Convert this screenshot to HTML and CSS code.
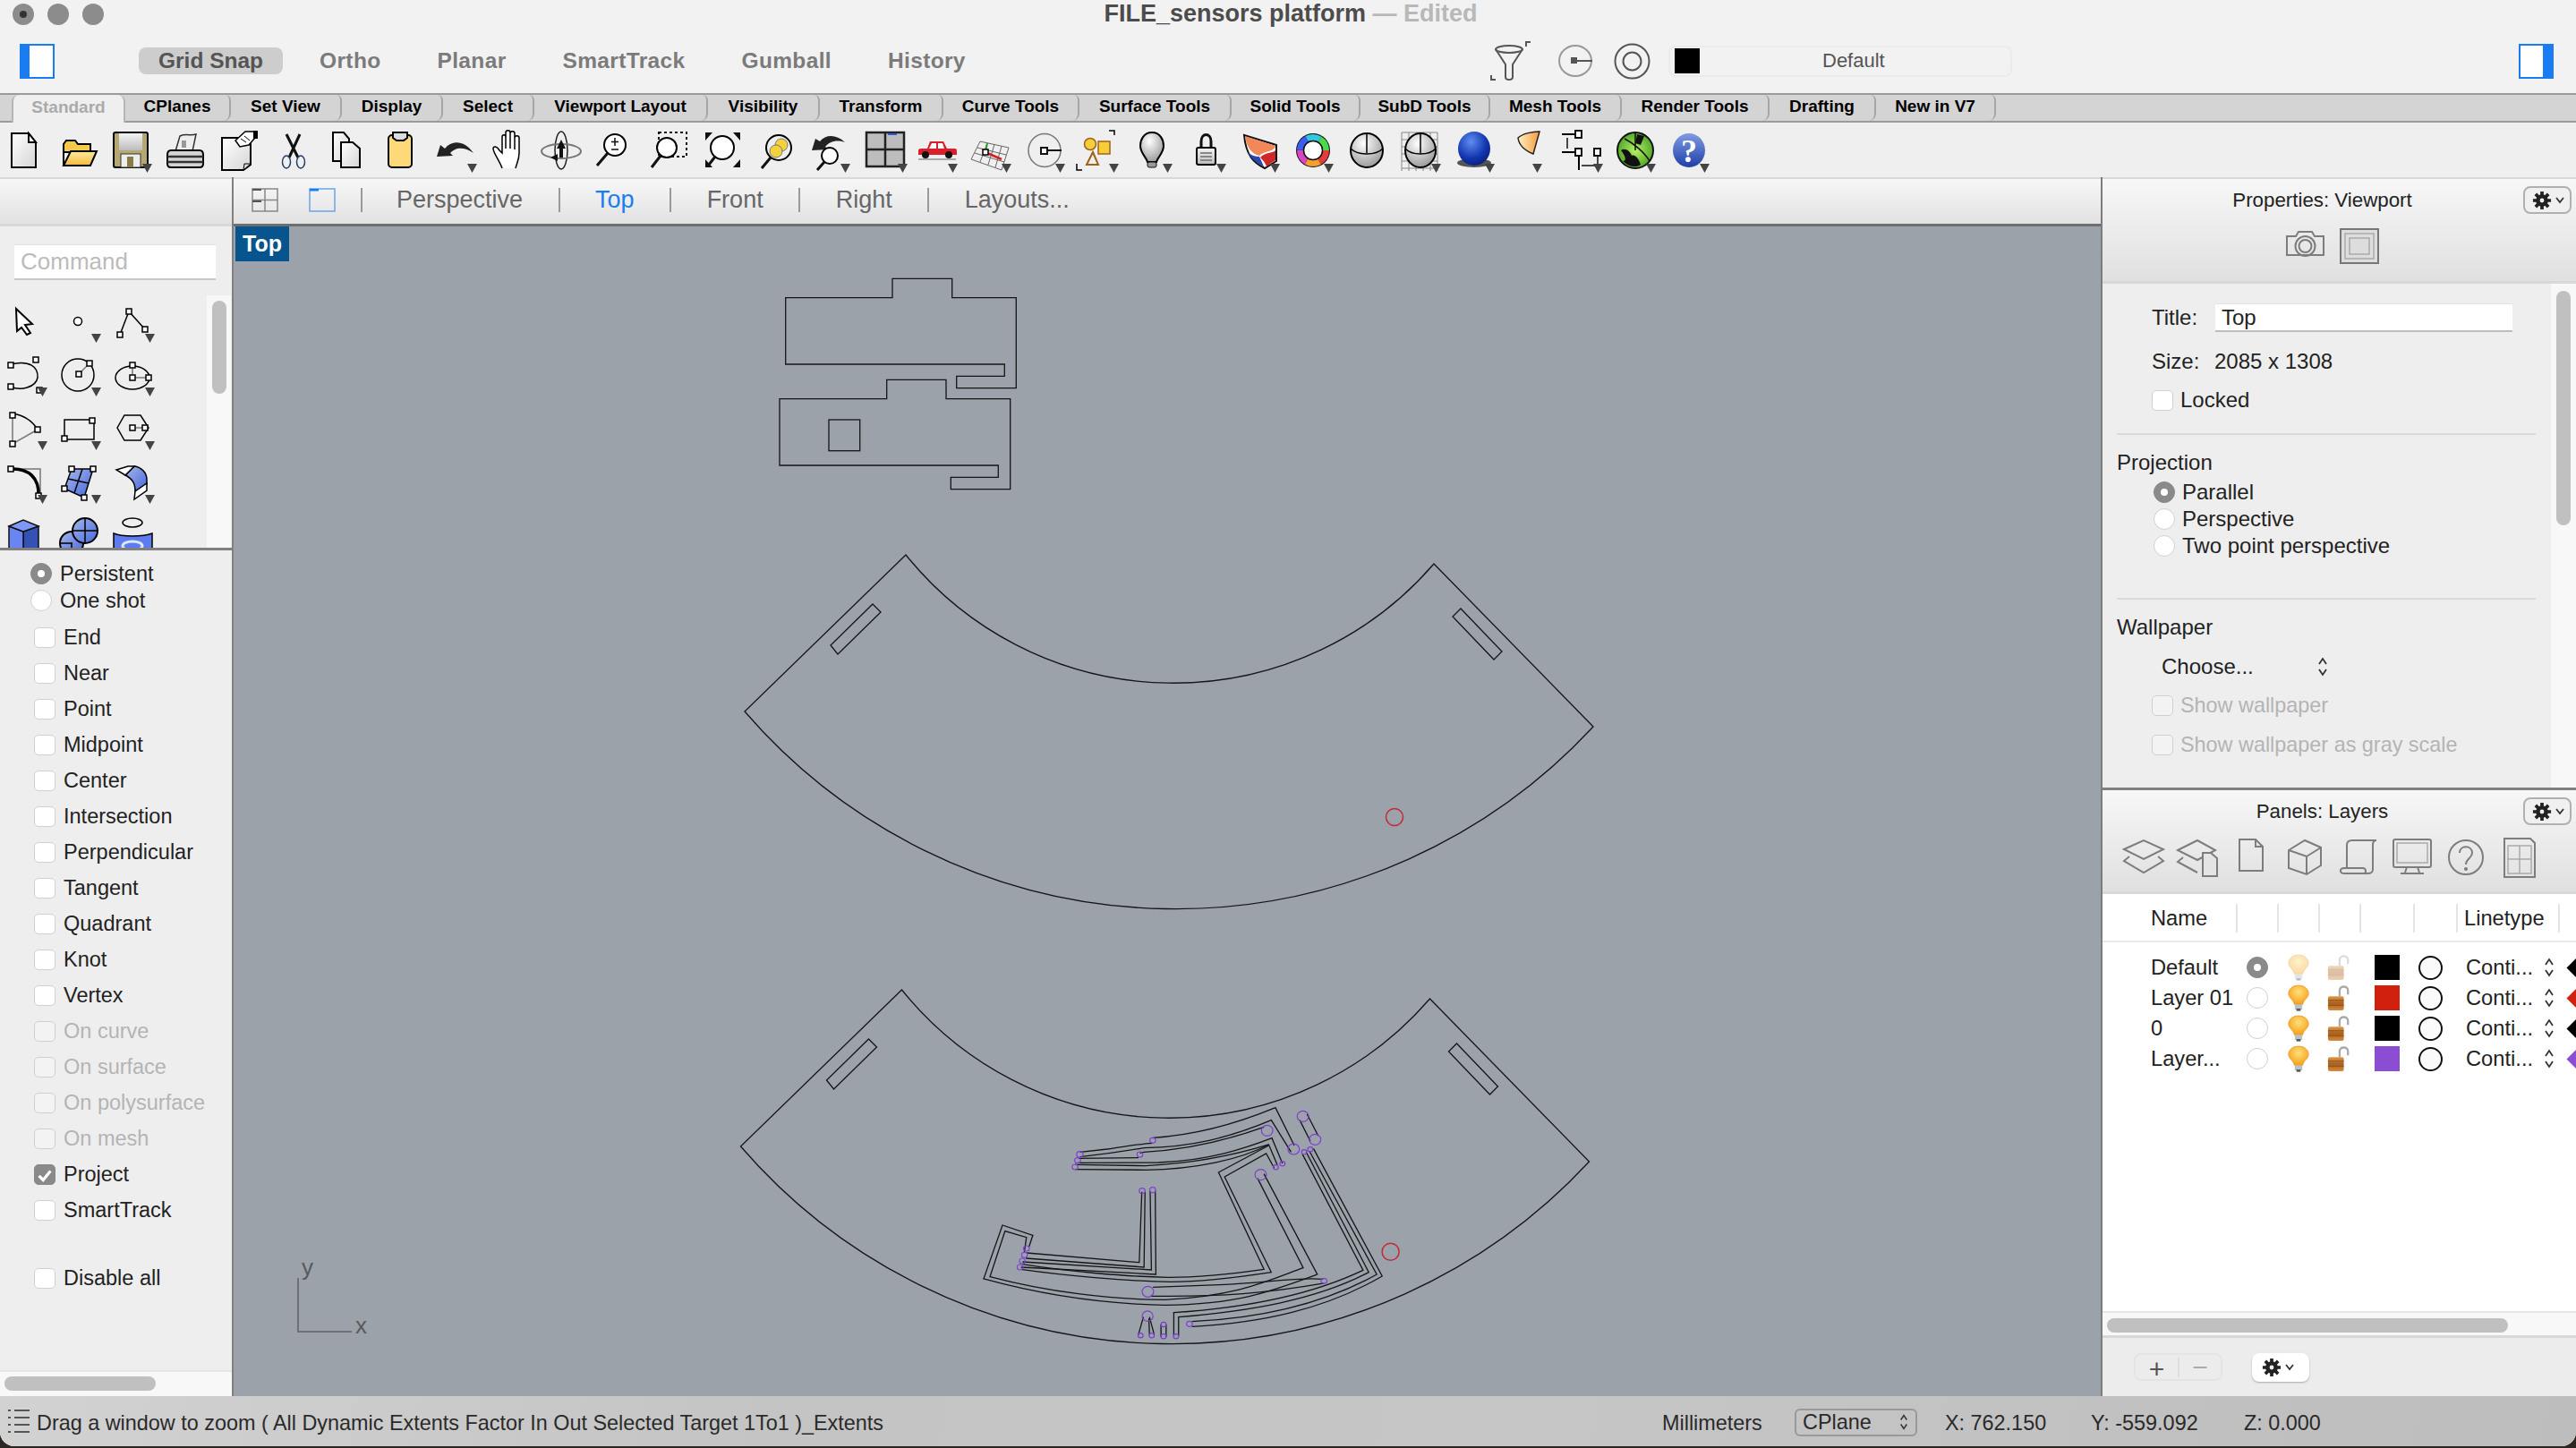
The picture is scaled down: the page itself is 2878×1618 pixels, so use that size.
FILE: index.html
```html
<!DOCTYPE html>
<html lang="en">
<head>
<meta charset="utf-8">
<title>FILE_sensors platform</title>
<link rel="stylesheet" href="styles.css">
</head>
<body>
<svg class="defs" width="0" height="0">
  <defs>
    <linearGradient id="gPage" x1="0" y1="0" x2="1" y2="1"><stop offset="0" stop-color="#fff"/><stop offset="1" stop-color="#d5d5d5"/></linearGradient>
    <linearGradient id="gYellow" x1="0" y1="0" x2="0" y2="1"><stop offset="0" stop-color="#fdeaa0"/><stop offset="1" stop-color="#f4b93c"/></linearGradient>
    <linearGradient id="gGray" x1="0" y1="0" x2="0" y2="1"><stop offset="0" stop-color="#f4f4f4"/><stop offset="1" stop-color="#bcbcbc"/></linearGradient>
    <linearGradient id="gBlue" x1="0" y1="0" x2="1" y2="1"><stop offset="0" stop-color="#a7b8e8"/><stop offset="1" stop-color="#4466dd"/></linearGradient>
    <linearGradient id="gHelp" x1="0" y1="0" x2="0" y2="1"><stop offset="0" stop-color="#7f9ce0"/><stop offset="1" stop-color="#1f3fa8"/></linearGradient>
    <radialGradient id="gSphere" cx=".4" cy=".3" r=".8"><stop offset="0" stop-color="#fff"/><stop offset="1" stop-color="#8f8f8f"/></radialGradient>
    <radialGradient id="gBlueBall" cx=".4" cy=".3" r=".8"><stop offset="0" stop-color="#5f8df0"/><stop offset=".6" stop-color="#1336b0"/><stop offset="1" stop-color="#061a70"/></radialGradient>
    <radialGradient id="gGlobe" cx=".5" cy=".5" r=".6"><stop offset="0" stop-color="#b7ef63"/><stop offset="1" stop-color="#3f9a20"/></radialGradient>
    <radialGradient id="gBulb" cx=".5" cy=".35" r=".7"><stop offset="0" stop-color="#ffe07a"/><stop offset="1" stop-color="#f59a12"/></radialGradient>
    <linearGradient id="gLock" x1="0" y1="0" x2="0" y2="1"><stop offset="0" stop-color="#e09a48"/><stop offset=".5" stop-color="#a8601e"/><stop offset="1" stop-color="#d68a3a"/></linearGradient>
    <linearGradient id="gCone" x1="0" y1="0" x2="1" y2="0"><stop offset="0" stop-color="#fff1c4"/><stop offset="1" stop-color="#f59a3a"/></linearGradient>
    <symbol id="gear" viewBox="0 0 24 24">
      <path class="gear-teeth" d="M12 1V23M1 12H23M4.2 4.2L19.8 19.8M19.8 4.2L4.2 19.8"/>
      <circle cx="12" cy="12" r="7.5" fill="#222"/><circle cx="12" cy="12" r="2.6" fill="#eee"/>
    </symbol>
    <symbol id="updown" viewBox="0 0 12 24">
      <path class="chev" d="M2 9L6 3L10 9M2 15L6 21L10 15"/>
    </symbol>
    <symbol id="bulb" viewBox="0 0 28 32">
      <path d="M14 1C6 1 2 6 2 11C2 16 8 18 9 24H19C20 18 26 16 26 11C26 6 22 1 14 1Z" fill="url(#gBulb)" stroke="#e8a030"/>
      <rect x="9.500" y="24" width="9" height="6" fill="#b8c0c8"/><rect x="11.500" y="29" width="5" height="3" fill="#555"/>
    </symbol>
    <symbol id="lock" viewBox="0 0 28 32">
      <path d="M15 14V7C15 1 25 1 25 7V12" fill="none" stroke="#aaa" stroke-width="2.500"/>
      <rect x="1" y="14" width="19" height="17" rx="2" fill="url(#gLock)"/>
      <path d="M1 19H20M1 25H20" stroke="#8a5018" stroke-width="1"/>
    </symbol>
  </defs>
</svg>

<div class="window">
  <header class="titlebar">
    <div class="title-row">
      <div class="lights"><span class="light light-close"></span><span class="light"></span><span class="light"></span></div>
      <div class="doc-title">FILE_sensors platform<span class="edited"> — Edited</span></div>
      <div></div>
    </div>
    <div class="tool-row">
      <svg class="side-toggle" viewBox="0 0 39 39"><rect x="1" y="1" width="37" height="37" fill="#fff" stroke="#1a7cf2" stroke-width="2"/><rect x="0" y="0" width="11" height="39" fill="#1a7cf2"/></svg>
      <nav class="modes">
        <span class="mode mode-on">Grid Snap</span>
        <span class="mode">Ortho</span>
        <span class="mode">Planar</span>
        <span class="mode">SmartTrack</span>
        <span class="mode">Gumball</span>
        <span class="mode">History</span>
      </nav>
      <div class="tool-right">
        <svg class="ic-filter" viewBox="0 0 45 44"><path class="thin" d="M40 6V1H45M1 38V43H6"/><ellipse class="thin" cx="21" cy="9" rx="15" ry="4"/><path class="thin" d="M6 9L17 26V40C17 44 25 44 25 40V26L36 9"/></svg>
        <svg class="ic-osnap" viewBox="0 0 39 36"><ellipse class="thin light-stroke" cx="19" cy="18" rx="18" ry="17"/><rect x="14" y="14" width="7" height="7" fill="#555"/><path class="thin" d="M21 18H38"/></svg>
        <svg class="ic-target" viewBox="0 0 41 41"><circle class="thin" cx="20.500" cy="20.500" r="19"/><circle class="thin" cx="20.500" cy="20.500" r="10"/></svg>
        <div class="layer-combo"><span class="layer-chip"></span><span class="layer-name">Default</span></div>
        <svg class="side-toggle side-right" viewBox="0 0 39 39"><rect x="1" y="1" width="37" height="37" fill="#fff" stroke="#1a7cf2" stroke-width="2"/><rect x="27" y="0" width="12" height="39" fill="#1a7cf2"/></svg>
      </div>
    </div>
  </header>

  <div class="tabs">
    <span class="tab tab-on">Standard</span><span class="tab">CPlanes</span><span class="tab">Set View</span><span class="tab">Display</span><span class="tab">Select</span><span class="tab">Viewport Layout</span><span class="tab">Visibility</span><span class="tab">Transform</span><span class="tab">Curve Tools</span><span class="tab">Surface Tools</span><span class="tab">Solid Tools</span><span class="tab">SubD Tools</span><span class="tab">Mesh Tools</span><span class="tab">Render Tools</span><span class="tab">Drafting</span><span class="tab">New in V7</span>
  </div>

  <div class="iconbar">
    <svg class="ti" viewBox="0 0 60 60"><path class="k2" fill="url(#gPage)" d="M16 11H35L43 21V49H16Z"/><path class="k2" fill="#fff" d="M35 11V21H43Z"/></svg>
    <svg class="ti" viewBox="0 0 60 60"><path class="k2" fill="#f5c94e" d="M14 46V23L17 19H27L30 23H44V32H14Z"/><path class="k2" fill="url(#gYellow)" d="M14 47L22 31H51L44 47Z"/></svg>
    <svg class="ti" viewBox="0 0 60 60"><rect class="k2" x="10" y="10" width="38" height="39" rx="2" fill="#b5a873"/><rect x="16" y="11" width="26" height="19" fill="url(#gGray)"/><rect x="18" y="34" width="22" height="15" fill="#eee" stroke="#333"/><rect x="25" y="37" width="7" height="12" fill="#8a7a45"/><path class="tri" d="M42 45H53L47.500 55Z"/></svg>
    <svg class="ti" viewBox="0 0 60 60"><path fill="#eee" stroke="#333" stroke-width="1.500" d="M19 31L24 14C30 11 36 14 42 12L38 31Z"/><rect x="26" y="19" width="5" height="8" fill="#999"/><path class="k2" fill="#d4d4d4" d="M10 35Q10 30 14 30H46Q50 30 50 35V45Q50 49 46 49H14Q10 49 10 45Z"/><path d="M10 37H50M10 43H50" stroke="#333" stroke-width="2.500"/></svg>
    <svg class="ti" viewBox="0 0 60 60"><path class="k2" fill="url(#gPage)" d="M11 16H43V46L35 52H11Z"/><path fill="#fff" stroke="#000" stroke-width="1.500" d="M26 19L37 9H47V17L41 24L31 26Z"/><path d="M32 17L38 21M36 14L42 19" stroke="#000"/><rect x="46" y="8" width="5" height="9" fill="#000"/><path fill="#ddd" stroke="#000" d="M35 52L36 45H43Z"/></svg>
    <svg class="ti" viewBox="0 0 60 60"><path d="M23 12L36 38M38 12L26 38" stroke="#111" stroke-width="3"/><ellipse cx="23" cy="43" rx="4.500" ry="7" fill="none" stroke="#24406e" stroke-width="1.500"/><ellipse cx="39" cy="43" rx="4.500" ry="7" fill="none" stroke="#24406e" stroke-width="1.500"/></svg>
    <svg class="ti" viewBox="0 0 60 60"><path class="k2" fill="url(#gPage)" d="M15 10H27L33 17V42H15Z"/><path class="k2" fill="url(#gPage)" d="M24 21H37L45 28V49H24Z"/></svg>
    <svg class="ti" viewBox="0 0 60 60"><rect class="k2" x="17" y="13" width="26" height="36" rx="4" fill="#fdd97a"/><path class="k2" fill="#ddd" d="M22 10H38V16L34 19H26L22 16Z"/></svg>
    <svg class="ti" viewBox="0 0 60 60"><path fill="#222" d="M11 37L15 24L20 28C28 18 42 19 52 33C42 26 32 26 26 33L29 36Z"/><path class="tri" d="M45 45H56L50.500 55Z"/></svg>
    <svg class="ti" viewBox="0 0 60 60"><path class="k1" transform="translate(2 0)" fill="#fff" d="M22 50C19 41 12 33 12 28C12 25 16 25 19 30L22 33V15C22 12 26 12 26 15V28V10C26 7 31 7 31 10V28V11C31 8 36 8 36 11V29V16C36 13 41 13 41 16V33C41 41 38 45 37 50"/></svg>
    <svg class="ti" viewBox="0 0 60 60"><ellipse cx="30" cy="30" rx="7" ry="21" fill="none" stroke="#222" stroke-width="1.500"/><ellipse cx="30" cy="31" rx="22" ry="8" fill="none" stroke="#777" stroke-width="2"/><path fill="#111" d="M30 18L35 28H32V38H28V28H25ZM18 38L26 34V42Z"/></svg>
    <svg class="ti" viewBox="0 0 60 60"><circle class="k2" cx="30" cy="24" r="12" fill="#fff"/><path stroke="#111" stroke-width="1.500" d="M30 16V25M26 20.500H34M26 29H34"/><path stroke="#111" stroke-width="3" d="M22 33L10 47"/></svg>
    <svg class="ti" viewBox="0 0 60 60"><rect x="19" y="10" width="31" height="27" fill="none" stroke="#111" stroke-width="2" stroke-dasharray="3 3"/><circle class="k2" cx="28" cy="27" r="11" fill="#fff"/><path stroke="#111" stroke-width="3" d="M21 36L11 49"/></svg>
    <svg class="ti" viewBox="0 0 60 60"><path fill="#111" d="M11 10H19L11 19ZM50 10H42L50 19ZM11 49H19L11 40ZM50 49H42L50 40Z"/><circle class="k2" cx="30" cy="27" r="13" fill="#fff"/><path stroke="#111" stroke-width="3" d="M22 37L15 46"/></svg>
    <svg class="ti" viewBox="0 0 60 60"><circle cx="36" cy="24" r="7" fill="#f3d23c" stroke="#777"/><circle cx="30" cy="31" r="7" fill="#f3d23c" stroke="#777"/><circle class="k2" cx="33" cy="27" r="14" fill="none"/><path stroke="#111" stroke-width="3" d="M24 38L14 50"/></svg>
    <svg class="ti" viewBox="0 0 60 60"><path fill="#222" d="M10 30L14 17L19 20C26 12 37 12 47 21C37 18 30 20 25 26L28 29Z"/><circle class="k2" cx="30" cy="36" r="9" fill="#fff"/><path stroke="#111" stroke-width="3" d="M24 43L16 52"/><path class="tri" d="M42 45H53L47.500 55Z"/></svg>
    <svg class="ti" viewBox="0 0 60 60"><rect x="11" y="10" width="42" height="38" fill="#bdbdbd" stroke="#222" stroke-width="2.500"/><path d="M32 10V48M11 29H53" stroke="#222" stroke-width="2.500"/><rect x="35" y="11" width="10" height="2" fill="#2a5bd0"/><path class="tri" d="M46 45H57L51.500 55Z"/></svg>
    <svg class="ti" viewBox="0 0 60 60"><path fill="#d9202a" d="M9 30Q9 28 12 28H19L22 20H37L41 28H50Q52 28 52 31V35H9Z"/><path fill="#fff" d="M24 22H29V28H21ZM31 22H36L38 28H31Z"/><circle cx="17" cy="35" r="4" fill="#111"/><circle cx="43" cy="35" r="4" fill="#111"/><rect x="9" y="39" width="42" height="2" fill="#aaa"/><path class="tri" d="M42 45H53L47.500 55Z"/></svg>
    <svg class="ti" viewBox="0 0 60 60"><path fill="none" stroke="#666" stroke-width="1" d="M18 20L50 27L42 52L8 40ZM26 22L18 43M34 23.500L27 46M42 25.500L35 49M15 27L47 35M12 33L45 43"/><path d="M24 32L26 22" stroke="#2aa02a" stroke-width="2"/><path d="M26 33L42 40" stroke="#d02020" stroke-width="2.500"/><rect x="21" y="29" width="6" height="6" fill="#fff" stroke="#000" stroke-width="1.500"/><path class="tri" d="M42 45H53L47.500 55Z"/></svg>
    <svg class="ti" viewBox="0 0 60 60"><ellipse cx="30" cy="30" rx="18" ry="18.500" fill="none" stroke="#777" stroke-width="1.500"/><rect x="26" y="27" width="7" height="7" fill="#fff" stroke="#111" stroke-width="2"/><path d="M33 30H49" stroke="#111" stroke-width="2"/><path class="tri" d="M42 45H53L47.500 55Z"/></svg>
    <svg class="ti" viewBox="0 0 60 60"><circle cx="21" cy="23" r="6.500" fill="#f6ce3a" stroke="#a0621a" stroke-width="1.500"/><rect x="30" y="20" width="13" height="14" fill="#f6ce3a" stroke="#a0621a" stroke-width="1.500"/><path fill="none" stroke="#a0621a" stroke-width="2" d="M24 32L30 46H17Z"/><path class="k1" fill="none" d="M42 8H48V13M6 45V52H12"/><path class="tri" d="M42 45H53L47.500 55Z"/></svg>
    <svg class="ti" viewBox="0 0 60 60"><path class="k2" fill="url(#gSphere)" d="M30 10C21 10 17 18 17 25C17 33 24 38 25 43H35C36 38 43 33 43 25C43 18 39 10 30 10Z"/><rect x="25" y="43" width="10" height="6" rx="2" fill="#999" stroke="#111"/><path class="tri" d="M42 45H53L47.500 55Z"/></svg>
    <svg class="ti" viewBox="0 0 60 60"><path d="M25 28V20C25 10 36 10 36 20V28" fill="none" stroke="#111" stroke-width="3"/><rect class="k2" x="20" y="27" width="21" height="19" rx="2" fill="url(#gGray)"/><path d="M24 33H37M24 37H37M24 41H37" stroke="#888" stroke-width="2"/><path class="tri" d="M42 45H53L47.500 55Z"/></svg>
    <svg class="ti" viewBox="0 0 60 60"><path fill="#fff" stroke="#111" stroke-width="2" d="M13 13L49 24V42L36 50C24 44 15 36 13 13Z"/><path fill="#f2885a" d="M14 14L48 25C47 32 36 30 30 36C22 34 16 28 14 14Z"/><path fill="#d02828" d="M31 38C36 32 46 33 48 30V41L38 48C36 43 34 41 31 38Z"/><path fill="#2a47b0" d="M17 32C20 38 26 44 35 48L30 37C25 37 20 35 17 32Z"/><path class="tri" d="M42 45H53L47.500 55Z"/></svg>
    <svg class="ti" viewBox="0 0 60 60"><circle cx="30" cy="30" r="19" fill="#111"/><g fill="none" stroke-width="7"><circle cx="30" cy="30" r="14.500" stroke="#e53b3b" stroke-dasharray="15.200 75.900"/><circle cx="30" cy="30" r="14.500" stroke="#f3a02c" stroke-dasharray="15.200 75.900" stroke-dashoffset="-15.200"/><circle cx="30" cy="30" r="14.500" stroke="#d845c4" stroke-dasharray="15.200 75.900" stroke-dashoffset="-30.400"/><circle cx="30" cy="30" r="14.500" stroke="#3b5ef0" stroke-dasharray="15.200 75.900" stroke-dashoffset="-45.600"/><circle cx="30" cy="30" r="14.500" stroke="#34c8e0" stroke-dasharray="15.200 75.900" stroke-dashoffset="-60.800"/><circle cx="30" cy="30" r="14.500" stroke="#4ed94a" stroke-dasharray="15.200 75.900" stroke-dashoffset="-76"/></g><circle cx="30" cy="30" r="10.500" fill="#fff" stroke="#111" stroke-width="1.500"/><path class="tri" d="M42 45H53L47.500 55Z"/></svg>
    <svg class="ti" viewBox="0 0 60 60"><ellipse class="k2" cx="30" cy="30" rx="18" ry="19" fill="url(#gSphere)"/><path class="k1" fill="none" d="M30 11V33M12 28C20 36 40 36 48 28"/></svg>
    <svg class="ti" viewBox="0 0 60 60"><path stroke="#888" stroke-width="1" d="M9 10H49M9 18H49M9 26H49M9 34H49M9 42H49M9 50H49M9 10V53M17 10V53M25 10V53M33 10V53M41 10V53M49 10V53"/><ellipse class="k2" cx="30" cy="30" rx="17" ry="19" fill="url(#gSphere)"/><path class="k1" fill="none" d="M30 11V33M13 28C20 36 40 36 47 28"/><path class="tri" d="M42 45H53L47.500 55Z"/></svg>
    <svg class="ti" viewBox="0 0 60 60"><ellipse cx="30" cy="44" rx="19" ry="5" fill="#555"/><ellipse cx="30" cy="28" rx="18" ry="19" fill="url(#gBlueBall)"/><path class="tri" d="M42 45H53L47.500 55Z"/></svg>
    <svg class="ti" viewBox="0 0 60 60"><path fill="url(#gCone)" stroke="#222" stroke-width="1.500" d="M19 16C24 11 36 9 43 9L36 34C26 30 20 24 19 16Z"/><path class="tri" d="M35 45H46L40.500 55Z"/></svg>
    <svg class="ti" viewBox="0 0 60 60"><path class="k2" fill="none" d="M8 12H24M8 32H24M27 32V52"/><rect x="23" y="8" width="7" height="8" fill="#fff" stroke="#111" stroke-width="2"/><rect x="23" y="28" width="7" height="8" fill="#fff" stroke="#111" stroke-width="2"/><rect x="44" y="28" width="7" height="8" fill="#fff" stroke="#111" stroke-width="2"/><path d="M14 16V28M30 47H46M48 36V52" stroke="#111" stroke-width="1.500"/><path class="tri" d="M43 45H54L48.500 55Z"/></svg>
    <svg class="ti" viewBox="0 0 60 60"><circle cx="30" cy="30" r="20" fill="url(#gGlobe)" stroke="#111" stroke-width="2"/><path fill="#111" d="M14 30C18 27 24 30 26 36C30 34 34 40 36 46C30 50 22 48 16 42C20 42 20 38 14 30ZM32 12L40 14L36 24L30 22Z"/><path fill="none" stroke="#111" stroke-width="1.500" d="M18 17C28 22 40 32 46 42M30 10V30"/><path class="tri" d="M42 45H53L47.500 55Z"/></svg>
    <svg class="ti" viewBox="0 0 60 60"><ellipse cx="30" cy="30" rx="18" ry="19" fill="url(#gHelp)"/><text class="help-q" x="30" y="43">?</text><path class="tri" d="M42 45H53L47.500 55Z"/></svg>
  </div>

  <main class="main">
    <aside class="left">
      <div class="left-head"></div>
      <div class="cmd-wrap"><div class="cmd">Command</div></div>
      <div class="tools">
        <div class="tool-grid">
          <svg class="si" viewBox="0 0 60 60"><path class="k2" fill="#fff" d="M18 15L36 32L28 33L34 42L30 44L24 36L19 40Z"/></svg>
          <svg class="si" viewBox="0 0 60 60"><circle class="k1" cx="27" cy="29" r="4.500" fill="#fff"/><path class="tri" d="M42 43H53L47.500 53Z"/></svg>
          <svg class="si" viewBox="0 0 60 60"><path class="k1" fill="none" d="M14 44L24 18L42 38"/><rect class="ctl" x="11" y="41" width="6" height="6"/><rect class="ctl" x="21" y="15" width="6" height="6"/><rect class="ctl" x="39" y="35" width="6" height="6"/><path class="tri" d="M42 43H53L47.500 53Z"/></svg>
          <svg class="si" viewBox="0 0 60 60"><path class="k1" fill="none" d="M12 17C33 12 43 20 42 32C40 43 23 47 12 42"/><rect class="ctl" x="9" y="15" width="6" height="6"/><rect class="ctl" x="37" y="9" width="6" height="6"/><rect class="ctl" x="9" y="39" width="6" height="6"/><rect class="ctl" x="41" y="43" width="6" height="6"/><path class="tri" d="M42 43H53L47.500 53Z"/></svg>
          <svg class="si" viewBox="0 0 60 60"><circle class="k1" cx="27" cy="29" r="18" fill="none"/><path class="g1" d="M28 28L40 16"/><rect class="ctl" x="25" y="25" width="6" height="6"/><rect class="ctl" x="37" y="13" width="6" height="6"/><path class="tri" d="M42 43H53L47.500 53Z"/></svg>
          <svg class="si" viewBox="0 0 60 60"><ellipse class="k1" cx="28" cy="32" rx="19" ry="13" fill="none"/><path class="g1" d="M28 18V32H46"/><rect class="ctl" x="25" y="15" width="6" height="6"/><rect class="ctl" x="25" y="29" width="6" height="6"/><rect class="ctl" x="43" y="29" width="6" height="6"/><path class="tri" d="M42 43H53L47.500 53Z"/></svg>
          <svg class="si" viewBox="0 0 60 60"><path class="g1" d="M14 14V46L42 30"/><path class="k1" fill="none" d="M14 12C26 14 36 20 42 30"/><rect class="ctl" x="11" y="11" width="6" height="6"/><rect class="ctl" x="39" y="27" width="6" height="6"/><rect class="ctl" x="11" y="43" width="6" height="6"/><path class="tri" d="M42 43H53L47.500 53Z"/></svg>
          <svg class="si" viewBox="0 0 60 60"><rect class="k1" x="12" y="19" width="33" height="22" fill="none"/><rect class="ctl" x="40" y="17" width="6" height="6"/><rect class="ctl" x="9" y="37" width="6" height="6"/><path class="tri" d="M42 43H53L47.500 53Z"/></svg>
          <svg class="si" viewBox="0 0 60 60"><path class="k1" fill="none" d="M11 28L19 14H37L46 28L37 42H19Z"/><path class="g1" d="M28 28H42"/><rect class="ctl" x="25" y="25" width="6" height="6"/><rect class="ctl" x="39" y="25" width="6" height="6"/><path class="tri" d="M42 43H53L47.500 53Z"/></svg>
          <svg class="si" viewBox="0 0 60 60"><path class="g1" d="M12 14H45V44"/><path fill="none" stroke="#000" stroke-width="3.500" d="M12 14C32 13 44 24 43 44"/><rect class="ctl" x="9" y="11" width="6" height="6"/><rect class="ctl" x="40" y="41" width="6" height="6"/><path class="tri" d="M42 43H53L47.500 53Z"/></svg>
          <svg class="si" viewBox="0 0 60 60"><path class="k1" fill="url(#gBlue)" d="M20 14L44 14L34 46L12 36Z"/><path class="k1" fill="none" d="M32 14L23 41M16 25L39 30"/><rect class="ctl" x="17" y="11" width="6" height="6"/><rect class="ctl" x="41" y="11" width="6" height="6"/><rect class="ctl" x="31" y="43" width="6" height="6"/><rect class="ctl" x="9" y="33" width="6" height="6"/><path class="tri" d="M42 43H53L47.500 53Z"/></svg>
          <svg class="si" viewBox="0 0 60 60"><path class="k1" fill="url(#gBlue)" d="M20 21L30 11C38 12 44 18 44 26V31L31 39C31 30 28 25 20 21Z"/><path class="k1" fill="#fff" d="M10 15L23 11L30 11L20 21ZM31 39L44 30V38L30 48Z"/><path class="tri" d="M42 43H53L47.500 53Z"/></svg>
          <svg class="si" viewBox="0 0 60 60"><path fill="#3451b5" stroke="#111" stroke-width="1.500" d="M26 24L43 18V50L26 54Z"/><path fill="#6a85f2" stroke="#111" stroke-width="1.500" d="M10 18L26 24V54L10 50Z"/><path fill="#7f98f5" stroke="#111" stroke-width="1.500" d="M10 18L26 11L43 18L26 24Z"/></svg>
          <svg class="si" viewBox="0 0 60 60"><circle class="k2" cx="20" cy="37" r="13" fill="url(#gBlue)"/><circle class="k2" cx="35" cy="23" r="14" fill="url(#gBlue)"/><path class="k1" fill="none" d="M21 23H49M35 9V37M7 37H21M20 37V50"/></svg>
          <svg class="si" viewBox="0 0 60 60"><ellipse class="k1" cx="28" cy="14" rx="11" ry="5" fill="none"/><path class="k1" fill="#5d7cf0" d="M7 26C16 30 40 30 50 26V56H7Z"/><ellipse cx="28" cy="40" rx="11" ry="5" fill="none" stroke="#dfe6ff" stroke-width="3"/></svg>
        </div>
        <div class="vscroll tools-scroll"><span class="vthumb tools-thumb"></span></div>
      </div>
      <div class="snaps">
        <label class="snap-radio"><span class="radio radio-on"></span>Persistent</label>
        <label class="snap-radio snap-gap"><span class="radio"></span>One shot</label>
        <label class="snap"><span class="check"></span>End</label>
        <label class="snap"><span class="check"></span>Near</label>
        <label class="snap"><span class="check"></span>Point</label>
        <label class="snap"><span class="check"></span>Midpoint</label>
        <label class="snap"><span class="check"></span>Center</label>
        <label class="snap"><span class="check"></span>Intersection</label>
        <label class="snap"><span class="check"></span>Perpendicular</label>
        <label class="snap"><span class="check"></span>Tangent</label>
        <label class="snap"><span class="check"></span>Quadrant</label>
        <label class="snap"><span class="check"></span>Knot</label>
        <label class="snap"><span class="check"></span>Vertex</label>
        <label class="snap off"><span class="check"></span>On curve</label>
        <label class="snap off"><span class="check"></span>On surface</label>
        <label class="snap off"><span class="check"></span>On polysurface</label>
        <label class="snap off"><span class="check"></span>On mesh</label>
        <label class="snap"><span class="check check-on"><svg viewBox="0 0 24 24"><path d="M5 13L10 18L19 7" fill="none" stroke="#fff" stroke-width="3.500"/></svg></span>Project</label>
        <label class="snap"><span class="check"></span>SmartTrack</label>
        <label class="snap snap-disable"><span class="check"></span>Disable all</label>
      </div>
      <div class="hscroll left-hscroll"><span class="hthumb left-thumb"></span></div>
    </aside>

    <section class="center">
      <div class="viewbar">
        <svg class="vb-icon" viewBox="0 0 30 27"><rect class="vb-box" x="1" y="1" width="28" height="25"/><path class="vb-box" d="M15 1V26M1 13.500H29"/><rect x="1" y="1" width="10" height="2" fill="#555"/><rect x="1" y="14" width="10" height="2" fill="#555"/></svg>
        <svg class="vb-icon vb-single" viewBox="0 0 30 27"><rect x="1" y="1" width="28" height="25" fill="none" stroke="#6aa5ea" stroke-width="1.500"/><rect x="1" y="1" width="10" height="2.500" fill="#1a7cf2"/></svg>
        <span class="vb-sep vb-first"></span>
        <span class="vb-tab">Perspective</span><span class="vb-sep"></span>
        <span class="vb-tab vb-on">Top</span><span class="vb-sep"></span>
        <span class="vb-tab">Front</span><span class="vb-sep"></span>
        <span class="vb-tab">Right</span><span class="vb-sep"></span>
        <span class="vb-tab">Layouts...</span>
      </div>
      <div class="viewport">
        <div class="vp-label">Top</div>
        <svg class="drawing" viewBox="261 253 2086 1307">
          <g id="parts">
            <path class="line" d="M877.700 332.700H997V311.300H1063.700V332.700H1135.300V433.700H1068.700V420.300H1122.300V407H877.700Z"/>
            <path class="line" d="M871 445.700H990.700V424.300H1057V445.700H1128.700V546.700H1062.300V533.300H1115.300V520H871Z"/>
            <rect class="line" x="926" y="469" width="34.700" height="34.700"/>
            <path class="line" d="M1012 620A384 384 0 0 0 1602 630L1780 812A636 636 0 0 1 832 795Z"/>
            <path class="line" d="M975 675L984 684L936 731L928 721Z"/>
            <path class="line" d="M1632 680L1678 728L1669 737L1623 689Z"/>
            <circle class="red" cx="1558" cy="913" r="9.500"/>
            <path class="line" d="M1007.500 1106A384 384 0 0 0 1597.500 1116L1775.500 1298A636 636 0 0 1 827.500 1281Z"/>
            <path class="line" d="M970.500 1161L979.500 1170L931.500 1217L923.500 1207Z"/>
            <path class="line" d="M1627.500 1166L1673.500 1214L1664.500 1223L1618.500 1175Z"/>
            <circle class="red" cx="1553.600" cy="1398.700" r="9.500"/>
          </g>
          <g transform="translate(1080 1200) scale(.3571 .3333)">
            <path class="line scaled" d="M1025 240L966 113C860 160 720 205 583 214"/>
            <path class="line scaled" d="M582 232C545 234 500 243 440 252L355 262"/>
            <path class="line scaled" d="M1015 262L953 155C820 215 700 245 555 248C500 258 440 268 355 278"/>
            <path class="line scaled" d="M930 178C800 228 680 255 555 262L542 265"/>
            <path class="line scaled" d="M538 281L350 283"/>
            <path class="line scaled" d="M345 298L600 297C760 290 870 250 955 215L988 300"/>
            <path class="line scaled" d="M340 304L560 308C720 300 860 265 945 237L972 305"/>
            <path class="line scaled" d="M340 320L560 322C720 320 860 285 945 237"/>
            <path class="line scaled" d="M962 315L937 267L807 345L953 665C800 690 720 697 640 697C500 695 300 675 170 655"/>
            <path class="line scaled" d="M945 240L788 330L930 655C800 675 720 682 630 682C500 680 300 660 175 638"/>
            <path class="line scaled" d="M188 600L540 632L548 395"/>
            <path class="line scaled" d="M185 618L555 648L558 395"/>
            <path class="line scaled" d="M175 630L578 657L574 392"/>
            <path class="line scaled" d="M170 648L592 672L590 392"/>
            <path class="line scaled" d="M910 350L1053 650C950 690 850 745 620 757C450 757 250 730 73 680L120 527L187 548L180 600"/>
            <path class="line scaled" d="M930 335L1097 672C950 730 850 772 620 775C450 772 250 745 53 687L112 507L207 541L195 580"/>
            <path class="line scaled" d="M583 715L790 707C940 700 1040 680 1115 688"/>
            <path class="line scaled" d="M575 745C800 748 940 735 1118 702"/>
            <path class="line scaled" d="M1085 250L1300 678C1120 790 920 835 705 847"/>
            <path class="line scaled" d="M1072 258L1283 672C1110 775 900 820 705 830"/>
            <path class="line scaled" d="M1062 262L1258 665C1090 760 880 795 663 815V878"/>
            <path class="line scaled" d="M1050 268L1240 658C1070 745 860 785 648 800V878"/>
            <path class="line scaled" d="M1042 155L1075 225M1065 135L1100 208"/>
            <path class="line scaled" d="M553 815L537 875M570 820L572 875M572 815L587 875"/>
            <path class="line scaled" d="M608 840V882M624 840V882"/>
            <g class="purple">
              <circle cx="582" cy="223" r="9"/><circle cx="354" cy="270" r="10"/><circle cx="347" cy="290" r="9"/><circle cx="339" cy="312" r="9"/><circle cx="542" cy="270" r="9"/>
              <circle cx="940" cy="190" r="18"/><circle cx="1023" cy="252" r="18"/><circle cx="967" cy="313" r="8"/><circle cx="988" cy="301" r="8"/><circle cx="920" cy="338" r="18"/>
              <circle cx="1052" cy="142" r="18"/><circle cx="1090" cy="220" r="18"/><circle cx="1056" cy="262" r="8"/><circle cx="1075" cy="253" r="8"/>
              <circle cx="187" cy="585" r="9"/><circle cx="181" cy="607" r="9"/><circle cx="174" cy="627" r="9"/><circle cx="167" cy="648" r="9"/>
              <circle cx="549" cy="392" r="9"/><circle cx="582" cy="389" r="9"/><circle cx="1118" cy="694" r="9"/><circle cx="567" cy="730" r="18"/>
              <circle cx="566" cy="812" r="17"/><circle cx="616" cy="840" r="8"/><circle cx="616" cy="880" r="8"/><circle cx="655" cy="880" r="8"/><circle cx="697" cy="838" r="9"/><circle cx="544" cy="877" r="8"/><circle cx="579" cy="877" r="8"/>
            </g>
          </g>
          <path class="axis" d="M333 1428V1488H393"/>
          <text class="axis-label" x="337" y="1425">y</text>
          <text class="axis-label" x="397" y="1490">x</text>
        </svg>
      </div>
    </section>

    <aside class="right">
      <section class="props">
        <div class="panel-head props-head">
          <div class="panel-title">Properties: Viewport</div>
          <button class="gear-btn"><svg class="gear" viewBox="0 0 24 24"><use href="#gear"/></svg><svg class="gear-caret" viewBox="0 0 10 8"><path d="M1 1L5 6L9 1" fill="none" stroke="#333" stroke-width="1.800"/></svg></button>
          <div class="props-icons">
            <svg class="pi-camera" viewBox="0 0 45 33"><path class="ln" d="M2 7H12L15 2H30L33 7H43V28H2Z"/><circle class="ln" cx="22.500" cy="18" r="11"/><circle class="ln" cx="22.500" cy="18" r="7"/></svg>
            <svg class="pi-frame" viewBox="0 0 44 40"><rect x="1" y="1" width="42" height="38" fill="#ddd" stroke="#777" stroke-width="2"/><rect class="ln-thin" x="6" y="6" width="32" height="28"/><rect class="ln-thin" x="11" y="11" width="22" height="18"/></svg>
          </div>
        </div>
        <div class="props-body">
          <div class="prop-form">
            <div class="prop-title"><span class="prop-key">Title:</span><span class="prop-input">Top</span></div>
            <div class="prop-size"><span class="prop-key prop-key-size">Size:</span><span>2085 x 1308</span></div>
            <label class="prop-check"><span class="check"></span>Locked</label>
            <hr class="rule rule-a">
            <div class="group-label">Projection</div>
            <label class="prop-radio"><span class="radio radio-on"></span>Parallel</label>
            <label class="prop-radio"><span class="radio"></span>Perspective</label>
            <label class="prop-radio"><span class="radio"></span>Two point perspective</label>
            <hr class="rule rule-b">
            <div class="group-label">Wallpaper</div>
            <div class="choose"><span>Choose...</span><svg class="updown" viewBox="0 0 12 24"><use href="#updown"/></svg></div>
            <label class="prop-check off check-w1"><span class="check"></span>Show wallpaper</label>
            <label class="prop-check off check-w2"><span class="check"></span>Show wallpaper as gray scale</label>
          </div>
          <div class="vscroll props-scroll"><span class="vthumb props-thumb"></span></div>
        </div>
      </section>
      <section class="layers">
        <div class="panel-head layers-head">
          <div class="panel-title">Panels: Layers</div>
          <button class="gear-btn"><svg class="gear" viewBox="0 0 24 24"><use href="#gear"/></svg><svg class="gear-caret" viewBox="0 0 10 8"><path d="M1 1L5 6L9 1" fill="none" stroke="#333" stroke-width="1.800"/></svg></button>
          <div class="layer-icons">
            <svg class="li" viewBox="0 0 60 46"><path class="ln" d="M8 14L30 4L52 14L30 25Z"/><path class="ln" d="M14 22L8 27L30 40L52 27L46 22"/></svg>
            <svg class="li" viewBox="0 0 60 46"><path class="ln" d="M8 15L30 4L50 15L30 26Z"/><path class="ln" d="M14 23L8 28L30 40"/><path class="ln li-doc" d="M36 18H45L52 24V44H36Z"/></svg>
            <svg class="li" viewBox="0 0 60 46"><path class="ln" d="M17 3H35L43 11V38H17Z"/><path class="ln" d="M35 3V11H43"/></svg>
            <svg class="li" viewBox="0 0 60 46"><path class="ln" d="M12 15L30 4L48 12V32L32 42L12 35Z"/><path class="ln" d="M12 15L32 22L48 12M32 22V42"/></svg>
            <svg class="li" viewBox="0 0 60 46"><path class="ln" d="M17 34V9C17 5 20 4 23 4H50C47 4 46 6 46 9V36C46 40 44 41 40 41H14C9 41 8 35 14 35H35C38 35 39 39 37 41"/></svg>
            <svg class="li" viewBox="0 0 60 46"><rect class="ln" x="9" y="3" width="42" height="31" rx="2"/><rect class="ln-thin" x="13" y="7" width="34" height="22"/><path class="ln" d="M24 34L22 40M36 34L38 40M17 41H43"/></svg>
            <svg class="li" viewBox="0 0 60 46"><circle class="ln" cx="30" cy="23" r="19"/><path class="ln" d="M23 18C23 9 37 9 37 18C37 24 30 24 30 31"/><circle cx="30" cy="36" r="2" fill="#7a7a7a"/></svg>
            <svg class="li" viewBox="0 0 60 46"><path class="ln" d="M13 2H42L47 7V45H13Z"/><path class="ln-thin" d="M17 10H43V41H17ZM30 10V41M17 25H43"/></svg>
          </div>
        </div>
        <div class="layer-list">
          <div class="lh">
            <span class="lh-cell lh-name">Name</span><span class="lh-cell lh-a"></span><span class="lh-cell lh-a"></span><span class="lh-cell lh-a"></span><span class="lh-cell lh-b"></span><span class="lh-cell lh-c"></span><span class="lh-cell lh-type">Linetype</span>
          </div>
          <div class="lrow"><span>Default</span><span class="radio radio-on"></span><svg class="lbulb dim" viewBox="0 0 28 32"><use href="#bulb"/></svg><svg class="llock dim" viewBox="0 0 28 32"><use href="#lock"/></svg><span class="swatch sw-black"></span><span class="lcircle"></span><span>Conti...</span><svg class="updown" viewBox="0 0 12 24"><use href="#updown"/></svg><span class="diamond sw-black"></span></div>
          <div class="lrow"><span>Layer 01</span><span class="radio"></span><svg class="lbulb" viewBox="0 0 28 32"><use href="#bulb"/></svg><svg class="llock" viewBox="0 0 28 32"><use href="#lock"/></svg><span class="swatch sw-red"></span><span class="lcircle"></span><span>Conti...</span><svg class="updown" viewBox="0 0 12 24"><use href="#updown"/></svg><span class="diamond sw-red"></span></div>
          <div class="lrow"><span>0</span><span class="radio"></span><svg class="lbulb" viewBox="0 0 28 32"><use href="#bulb"/></svg><svg class="llock" viewBox="0 0 28 32"><use href="#lock"/></svg><span class="swatch sw-black"></span><span class="lcircle"></span><span>Conti...</span><svg class="updown" viewBox="0 0 12 24"><use href="#updown"/></svg><span class="diamond sw-black"></span></div>
          <div class="lrow"><span>Layer...</span><span class="radio"></span><svg class="lbulb" viewBox="0 0 28 32"><use href="#bulb"/></svg><svg class="llock" viewBox="0 0 28 32"><use href="#lock"/></svg><span class="swatch sw-purple"></span><span class="lcircle"></span><span>Conti...</span><svg class="updown" viewBox="0 0 12 24"><use href="#updown"/></svg><span class="diamond sw-purple"></span></div>
        </div>
        <div class="hscroll right-hscroll"><span class="hthumb right-thumb"></span></div>
        <div class="layer-foot">
          <div class="plusminus"><span class="pm-plus">+</span><span class="pm-minus">−</span></div>
          <button class="gear-foot"><svg class="gear" viewBox="0 0 24 24"><use href="#gear"/></svg><svg class="gear-caret" viewBox="0 0 10 8"><path d="M1 1L5 6L9 1" fill="none" stroke="#333" stroke-width="1.800"/></svg></button>
        </div>
      </section>
    </aside>
  </main>

  <footer class="status">
    <svg class="st-list" viewBox="0 0 26 30"><path d="M1 3H4M8 3H25M1 11H4M8 11H25M1 19H4M8 19H25M1 27H4M8 27H25" stroke="#555" stroke-width="2.200"/></svg>
    <span class="st-msg">Drag a window to zoom ( All Dynamic Extents Factor In Out Selected Target 1To1 )_Extents</span>
    <span class="st-units">Millimeters</span>
    <span class="st-plane">CPlane<svg class="updown" viewBox="0 0 12 24"><use href="#updown"/></svg></span>
    <span class="st-x">X: 762.150</span>
    <span class="st-y">Y: -559.092</span>
    <span class="st-z">Z: 0.000</span>
  </footer>
</div>
</body>
</html>
```
FILE: styles.css
```css
* { box-sizing: border-box; }
html, body { margin: 0; padding: 0; }
body {
  width: 2878px; height: 1618px; overflow: hidden;
  background: #2c2622;
  font-family: "Liberation Sans", Arial, sans-serif;
  color: #222;
}
.defs { position: absolute; }
svg { display: block; flex: none; }
button { font: inherit; padding: 0; margin: 0; }

.window { width: 2878px; height: 1616px; display: flex; flex-direction: column; background: #f2f2f2; border-radius: 0 0 16px 16px; overflow: hidden; }

/* title bar */
.titlebar { height: 104px; flex: none; background: #f2f2f2; }
.title-row { height: 32px; display: grid; grid-template-columns: 1fr auto 1fr; }
.lights { display: flex; gap: 15px; padding: 4px 0 0 14px; }
.light { width: 24px; height: 24px; border-radius: 50%; background: #8c8c8c; position: relative; }
.light-close::after { content: ""; position: absolute; left: 8px; top: 8px; width: 8px; height: 8px; border-radius: 50%; background: #333; }
.doc-title { font-size: 27px; font-weight: 700; color: #4c4c4c; line-height: 30px; padding-left: 6px; }
.edited { color: #b8b8b8; }
.tool-row { height: 72px; display: flex; align-items: center; padding-left: 22px; }
.side-toggle { width: 39px; height: 39px; }
.modes { display: flex; gap: 19px; margin-left: 94px; }
.mode { height: 30px; line-height: 30px; padding: 0 22px; border-radius: 8px; font-size: 24.500px; font-weight: 700; color: #7b7b7b; letter-spacing: .35px; }
.mode-on { background: #cdcdcd; color: #555; letter-spacing: 0; }
.tool-right { margin-left: auto; display: flex; align-items: center; padding-right: 25px; }
.ic-filter { width: 45px; height: 44px; }
.ic-osnap { width: 39px; height: 36px; margin-left: 31px; }
.ic-target { width: 41px; height: 41px; margin-left: 23px; }
.thin { fill: none; stroke: #555; stroke-width: 2; }
.light-stroke { stroke: #999; }
.layer-combo { width: 384px; height: 35px; margin-left: 20px; border: 2px solid #ebebeb; border-radius: 8px; display: flex; align-items: center; padding-left: 5px; position: relative; }
.layer-chip { width: 28px; height: 28px; background: #000; }
.layer-name { margin-left: 137px; font-size: 22px; color: #555; }
.side-right { margin-left: 566px; }

/* tabs */
.tabs { height: 33px; flex: none; background: #d4d4d4; border-top: 2px solid #9b9b9b; border-bottom: 2px solid #9b9b9b; padding-left: 13px; display: grid; grid-template-columns: 127px 118px 124px 113px 102px 194px 125px 138px 152px 170px 144px 145px 147px 165px 119px 134px; }
.tab { display: flex; align-items: center; justify-content: center; font-size: 19px; font-weight: 700; color: #000; border-right: 2px solid #a6a6a6; border-radius: 0 6px 8px 0; padding-bottom: 3px; }
.tab-on { background: #efefef; color: #aaa; border: 2px solid #b5b5b5; border-width: 0 2px; border-radius: 8px 8px 0 0; margin-bottom: -2px; }

/* icon bar */
.iconbar { height: 61px; flex: none; background: #efefef; display: flex; margin-left: -3px; padding-top: 1px; }
.ti { width: 60px; height: 60px; }
.k2 { stroke: #000; stroke-width: 2; }
.k1 { stroke: #000; stroke-width: 1.500; }
.g1 { stroke: #777; stroke-width: 1.500; fill: none; }
.tri { fill: #444; }
.ctl { fill: #fff; stroke: #000; stroke-width: 1.500; }
.help-q { fill: #fff; font-family: "Liberation Serif", serif; font-size: 36px; font-weight: 700; text-anchor: middle; }

/* main */
.main { flex: 1; display: flex; min-height: 0; }
.left { width: 261px; flex: none; background: #eee; border-right: 2px solid #808080; display: flex; flex-direction: column; }
.left-head { height: 55px; flex: none; background: linear-gradient(#f7f7f7, #e2e2e2); border-top: 2px solid #d8d8d8; border-bottom: 3px solid #d8d8d8; }
.cmd-wrap { height: 77px; flex: none; padding: 20px 18px 0 16px; }
.cmd { height: 40px; background: #fff; border-bottom: 2px solid #c8c8c8; border-top: 1px solid #e2e2e2; font-size: 26px; line-height: 37px; color: #bbb; padding-left: 7px; }
.tools { height: 285px; flex: none; display: flex; overflow: hidden; border-bottom: 3px solid #808080; }
.tool-grid { width: 231px; display: grid; grid-template-columns: repeat(3, 60px); grid-auto-rows: 60px; align-content: start; }
.si { width: 60px; height: 60px; }
.vscroll { background: #f8f8f8; position: relative; flex: none; }
.vthumb { display: block; background: #c0c0c0; border-radius: 8px; width: 16px; }
.tools-scroll { width: 27px; padding: 6px 0 0 6px; }
.tools-thumb { height: 104px; }

.snaps { flex: 1; padding-top: 11px; min-height: 0; font-size: 23.500px; }
.snap-radio { height: 30px; display: flex; align-items: center; padding-left: 34px; }
.snap-gap { margin-bottom: 6px; }
.snap { height: 40px; display: flex; align-items: center; padding-left: 38px; }
.snap-radio .radio { margin-right: 9px; }
.snap .check { margin-right: 9px; }
.snap-disable { margin-top: 36px; }
.off { color: #b4b4b4; }
.off .check { background: #f3f3f3; }
.radio { width: 24px; height: 24px; border-radius: 50%; background: #fff; border: 1px solid #d0d0d0; flex: none; display: block; position: relative; }
.radio-on { background: #8a8a8a; border-color: #888; }
.radio-on::after { content: ""; position: absolute; left: 7px; top: 7px; width: 8px; height: 8px; background: #fff; border-radius: 50%; }
.check { width: 24px; height: 23px; background: #fff; border: 1px solid #d0d0d0; border-radius: 5px; flex: none; display: block; }
.check-on { background: #8a8a8a; border-color: #888; }
.hscroll { background: #f8f8f8; border-top: 2px solid #e6e6e6; flex: none; }
.hthumb { display: block; height: 16px; background: #c0c0c0; border-radius: 8px; }
.left-hscroll { height: 29px; padding: 5px 0 0 5px; }
.left-thumb { width: 169px; }

/* centre */
.center { flex: 0 0 2086px; display: flex; flex-direction: column; min-width: 0; }
.viewbar { height: 55px; flex: none; display: flex; align-items: center; padding: 0 0 3px 20px; background: linear-gradient(#f7f7f7, #e2e2e2); border-top: 2px solid #d8d8d8; border-bottom: 3px solid #6e6e6e; }
.vb-icon { width: 30px; height: 27px; }
.vb-box { fill: none; stroke: #888; stroke-width: 1.500; }
.vb-single { margin-left: 34px; }
.vb-sep { width: 2px; height: 27px; background: #9a9a9a; margin: 0 39.500px; }
.vb-first { margin-left: 28px; margin-right: 38px; }
.vb-tab { font-size: 27px; color: #666; }
.vb-on { color: #1a7ef0; }
.viewport { flex: 1; position: relative; background: #9ba2aa; min-height: 0; }
.vp-label { position: absolute; left: 2px; top: 0; width: 60px; height: 39px; background: #07548e; color: #fff; font-size: 25px; font-weight: 700; text-align: center; line-height: 39px; }
.drawing { width: 100%; height: 100%; }
.line { fill: none; stroke: #151515; stroke-width: 1.300; }
.scaled { vector-effect: non-scaling-stroke; }
.red { fill: none; stroke: #c42a35; stroke-width: 1.500; }
.purple circle { fill: none; stroke: #7d3fd0; stroke-width: 1.200; vector-effect: non-scaling-stroke; }
.axis { fill: none; stroke: #606060; stroke-width: 1.500; }
.axis-label { fill: #5a5a5a; font-size: 26px; }

/* right */
.right { flex: 0 0 531px; min-width: 0; display: flex; flex-direction: column; border-left: 2px solid #7c7c7c; background: #eee; overflow: hidden; }
.props { height: 682px; flex: none; display: flex; flex-direction: column; }
.panel-head { position: relative; background: linear-gradient(#f7f7f7, #e0e0e0); border-top: 2px solid #d8d8d8; border-bottom: 3px solid #d8d8d8; flex: none; }
.props-head { height: 119px; }
.panel-title { text-align: center; font-size: 22.300px; color: #222; padding-right: 38px; }
.props-head .panel-title { line-height: 48px; }
.gear-btn { position: absolute; right: 5px; top: 8px; width: 54px; height: 31px; border: 2px solid #b0b0b0; border-radius: 8px; background: #f0f0f0; display: flex; align-items: center; padding-left: 8px; }
.gear { width: 22px; height: 22px; }
.gear-teeth { stroke: #222; stroke-width: 4; fill: none; }
.gear-caret { width: 10px; height: 8px; margin-left: 4px; }
.props-icons { display: flex; align-items: flex-start; gap: 16px; margin-left: 204px; margin-top: 7px; }
.pi-camera { width: 45px; height: 33px; margin-top: 2px; }
.pi-frame { width: 44px; height: 40px; }
.ln { fill: none; stroke: #7d7d7d; stroke-width: 2; }
.li-doc { fill: #e4e4e4; }
.ln-thin { fill: none; stroke: #aaa; stroke-width: 1.500; }
.props-body { flex: 1; display: flex; min-height: 0; overflow: hidden; }
.prop-form { width: 501px; flex: none; padding: 22px 0 0 16px; font-size: 24px; }
.prop-title { display: flex; align-items: center; height: 32px; padding-left: 39px; }
.prop-key { width: 71px; flex: none; }
.prop-key-size { padding-left: 1px; }
.prop-input { width: 332px; height: 32px; background: #fff; border-bottom: 2px solid #bdbdbd; border-top: 1px solid #e2e2e2; line-height: 30px; padding-left: 7px; }
.prop-size { display: flex; align-items: center; height: 32px; margin-top: 17px; padding-left: 38px; }
.prop-check { display: flex; align-items: center; height: 30px; margin-top: 12px; padding-left: 39px; }
.prop-check .check { margin-right: 8px; }
.prop-check.off { font-size: 23.400px; }
.rule { border: 0; height: 2px; background: #dadada; margin: 0; width: 468px; }
.rule-a { margin-top: 22px; }
.rule-b { margin-top: 43px; }
.group-label { height: 30px; line-height: 30px; margin-top: 16px; }
.prop-radio { display: flex; align-items: center; height: 30px; padding-left: 41px; }
.prop-radio .radio { margin-right: 8px; }
.prop-form .group-label + .prop-radio { margin-top: 3px; }
.choose { display: flex; align-items: center; height: 30px; margin-top: 14px; padding-left: 50px; }
.choose .updown { margin-left: 71px; }
.updown { width: 12px; height: 24px; }
.chev { fill: none; stroke: #333; stroke-width: 1.800; }
.check-w1 { margin-top: 13px; }
.check-w2 { margin-top: 14px; }
.props-scroll { flex: 1; padding: 8px 0 0 6px; }
.props-thumb { height: 262px; }

.layers { flex: 1; display: flex; flex-direction: column; min-height: 0; border-top: 3px solid #808080; }
.layers-head { height: 116px; border-top: 0; }
.layers-head .panel-title { line-height: 48px; }
.layers-head .gear-btn { top: 8px; }
.layer-icons { display: flex; margin-left: 16px; margin-top: 4px; }
.li { width: 60px; height: 46px; }
.layer-list { flex: 1; background: #fff; font-size: 23.700px; min-height: 0; overflow: hidden; }
.lh { height: 54px; display: flex; align-items: center; border-bottom: 2px solid #e8e8e8; padding: 2px 0 0 54px; }
.lh-cell { height: 32px; line-height: 32px; border-right: 2px solid #e4e4e4; flex: none; }
.lh-name { width: 97px; }
.lh-a { width: 46px; }
.lh-b { width: 60px; }
.lh-c { width: 48px; }
.lh-type { width: 114px; padding-left: 7px; }
.lrow { height: 34px; display: grid; grid-template-columns: 107px 46px 45px 52px 49px 53px 87px 20px 1fr; align-items: center; padding-left: 54px; }
.lh + .lrow { margin-top: 11px; }
.lbulb, .llock { width: 26px; height: 30px; }
.lbulb { margin-left: -1px; }
.llock { margin-left: -1px; }
.dim { opacity: .4; }
.swatch { width: 28px; height: 28px; display: block; }
.sw-black { background: #000; }
.sw-red { background: #d2200f; }
.sw-purple { background: #8b4dd3; }
.lcircle { width: 27px; height: 27px; border-radius: 50%; border: 2px solid #111; background: #fafafa; display: block; }
.diamond { width: 17px; height: 17px; transform: rotate(45deg); margin-left: 9px; display: block; }
.right-hscroll { height: 30px; padding: 6px 0 0 5px; border-bottom: 3px solid #d8d8d8; }
.right-thumb { width: 448px; }
.layer-foot { height: 65px; flex: none; background: #ececec; display: flex; align-items: flex-start; padding: 17px 0 0 35px; }
.plusminus { width: 99px; height: 31px; border: 2px solid #e4e4e4; border-radius: 8px; display: flex; align-items: center; font-size: 30px; }
.pm-plus { width: 50px; text-align: center; color: #555; border-right: 2px solid #dedede; line-height: 26px; height: 22px; font-weight: 400; }
.pm-minus { width: 47px; text-align: center; color: #aaa; line-height: 22px; }
.gear-foot { width: 64px; height: 32px; margin-left: 33px; border: 0; border-radius: 8px; background: #fff; box-shadow: 0 1px 2px #aaa; display: flex; align-items: center; padding-left: 11px; }

/* status */
.status { height: 56px; flex: none; background: linear-gradient(100deg, #d2d2d2, #c4c4c4 30%, #c6c6c6 60%, #bdbdbd); display: flex; align-items: center; padding: 5px 0 0 8px; font-size: 23.400px; color: #2a2a2a; }
.st-list { width: 26px; height: 30px; margin-top: -5px; }
.st-msg { margin-left: 7px; width: 1816px; flex: none; }
.st-units { width: 148px; flex: none; }
.st-plane { width: 137px; height: 31px; flex: none; border: 2px solid #999; border-radius: 6px; display: flex; align-items: center; justify-content: space-between; padding: 0 8px 0 7px; margin-top: -3px; }
.st-plane .updown { width: 10px; height: 20px; }
.st-x { margin-left: 31px; width: 163px; flex: none; }
.st-y { width: 171px; flex: none; }
.st-z { flex: none; }
```
